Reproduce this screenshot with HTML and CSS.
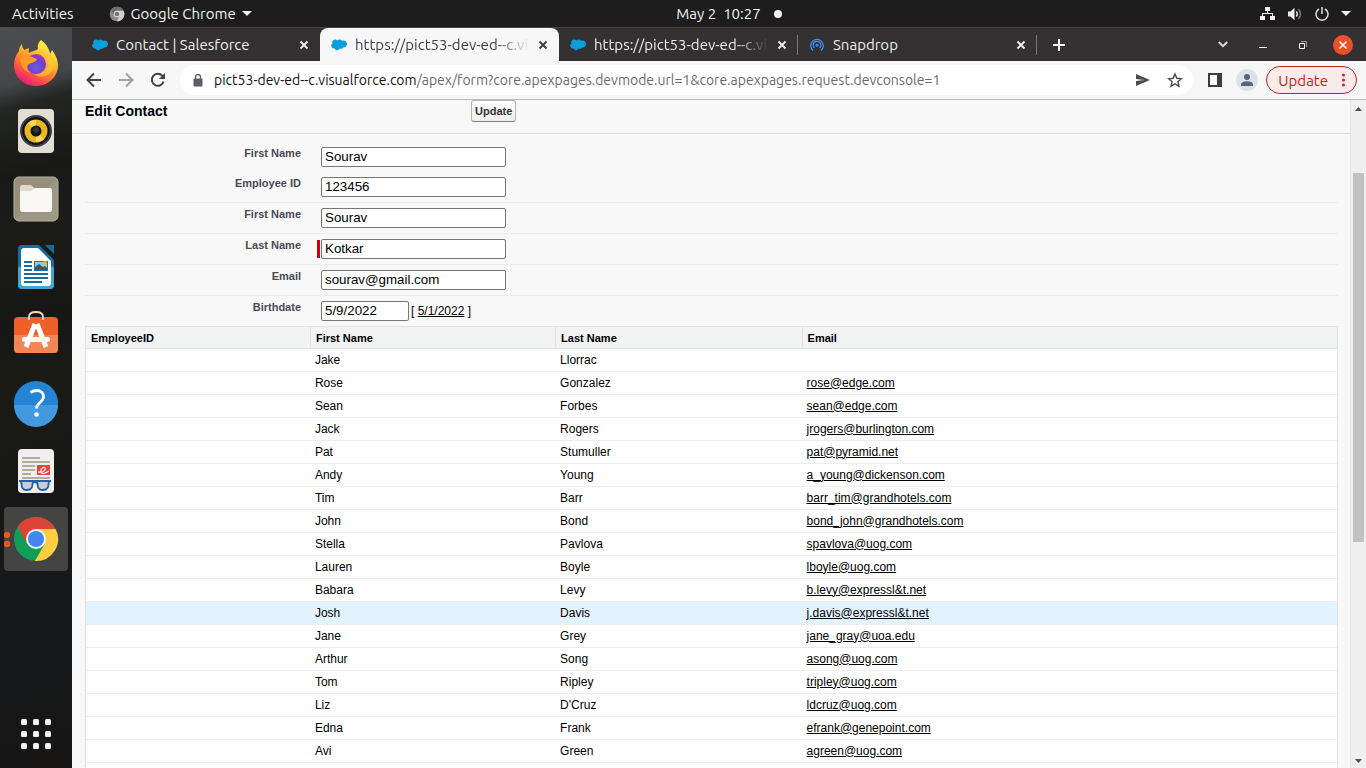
FILE: index.html
```html
<!DOCTYPE html>
<html lang="en">
<head>
<meta charset="utf-8">
<title>Edit Contact</title>
<link rel="stylesheet" href="styles.css">
</head>
<body>
<svg class="defs" aria-hidden="true">
  <symbol id="cloud" viewBox="0 0 16 12"><path fill="#0a9edc" d="M6.6 1.4C7.2.8 8 .5 8.800.6c1 .1 1.800.5 2.300 1.200.5-.2 1-.3 1.500-.3C14.500 1.500 16 3.100 16 5s-1.500 3.600-3.400 3.600l-.7-.1c-.4.8-1.200 1.300-2.100 1.300-.4 0-.7-.1-1-.2-.5 1-1.400 1.700-2.600 1.700-1.200 0-2.200-.7-2.600-1.800l-.6.1C1.400 9.600.2 8.400.2 6.800c0-1 .5-1.900 1.300-2.400-.2-.4-.3-.8-.3-1.200C1.200 1.600 2.500.4 4.100.4c1 0 1.900.3 2.500 1z"/></symbol>
  <symbol id="x" viewBox="0 0 10 10"><path d="M1.500 1.500l7 7m0-7l-7 7" fill="none" stroke="currentColor" stroke-width="1.900"/></symbol>
</svg>
<header class="topbar">
  <div class="top-left">
    <button class="plain" type="button">Activities</button>
    <button class="plain app-menu" type="button">
      <svg width="16" height="16" viewBox="0 0 48 48"><circle cx="24" cy="24" r="22" fill="#8b8b8b"/><path fill="#6d6d6d" d="M5.500 12A22 22 0 0 1 43.600 14H24L15.300 29z"/><path fill="#cfcfcf" d="M43.600 14A22 22 0 0 1 22.900 46L32.700 29 24 14z"/><circle cx="24" cy="24" r="10" fill="#ddd"/><circle cx="24" cy="24" r="7" fill="#777"/></svg>
      <span>Google Chrome</span>
      <svg width="10" height="5" viewBox="0 0 10 5"><path fill="#f2f2f2" d="M0 0h10L5 5z"/></svg>
    </button>
  </div>
  <div class="clock"><span>May 2</span><span>10:27</span><i class="dot"></i></div>
  <div class="top-right">
    <svg width="15" height="14" viewBox="0 0 15 14" fill="#f2f2f2"><path d="M5 0h5v4H5zM0 9h5v4H0zM10 9h5v4h-5z"/><path d="M7 4h1v2h5v3h-1V7H3v2H2V6h5z"/></svg>
    <svg width="16" height="14" viewBox="0 0 16 14"><path fill="#f2f2f2" d="M1 4.500h2.500L7.500.8v12.400L3.500 9.500H1z"/><path fill="none" stroke="#f2f2f2" stroke-width="1.400" d="M9.300 4.500a3.500 3.500 0 0 1 0 5"/><path fill="none" stroke="#8a8a8a" stroke-width="1.300" d="M11.500 2.300a6.500 6.500 0 0 1 0 9.400"/></svg>
    <svg width="14" height="14" viewBox="0 0 14 14" fill="none" stroke="#dcdcdc" stroke-width="1.500"><path d="M4 2a6 6 0 1 0 6 0M7 0v7"/></svg>
    <svg class="caret" width="10" height="5" viewBox="0 0 10 5"><path fill="#f2f2f2" d="M0 0h10L5 5z"/></svg>
  </div>
</header>
<div class="desktop">
  <nav class="dock" aria-label="Dock">
    <button type="button" aria-label="Firefox"><svg width="48" height="48" viewBox="0 0 48 48"><defs><linearGradient id="ff" x1=".8" y1=".1" x2=".3" y2="1"><stop offset="0" stop-color="#fff34a"/><stop offset=".35" stop-color="#ffb627"/><stop offset=".65" stop-color="#ff6a35"/><stop offset="1" stop-color="#f0147a"/></linearGradient><radialGradient id="fp" cx=".5" cy=".7" r=".7"><stop offset="0" stop-color="#6a5ae8"/><stop offset=".6" stop-color="#7040c8"/><stop offset="1" stop-color="#a832d8"/></radialGradient></defs><path fill="url(#ff)" d="M29 1c5 4 8 8 9 14l2-4c4 5 6 11 6 15 0 12-10 21-22 21S2 38 2 26c0-6 2-10 5-14 0-3 1-5 3-7 0 3 1 5 3 6 1-1 3-2 4-2 0 2-1 4 0 5 4-3 9-2 9-5-1-3 1-6 3-8z"/><circle cx="24" cy="25" r="10" fill="url(#fp)"/><path fill="#ff9a22" d="M8 20c4-2 8-4 12-2l5 2c-1 4-6 3-9 6-2 3 0 6 3 8-6-1-10-6-11-14z"/><path fill="#ffc63a" d="M26 11c7 0 11 6 10 13-1 8-7 12-14 11 7 6 18 2 20-9 0-8-5-10-7-12 1 2 1 3 0 4-2-4-5-6-9-7z" opacity=".7"/></svg></button>
    <button type="button" aria-label="Rhythmbox"><svg width="48" height="48" viewBox="0 0 48 48"><rect x="6" y="2" width="36" height="44" rx="4" fill="#e3ded3"/><circle cx="24" cy="24" r="16" fill="#40424f"/><circle cx="24" cy="24" r="14" fill="#15161a"/><circle cx="24" cy="24" r="11.500" fill="#e8b71d"/><path fill="#f8d95b" d="M24 24L16 16a11 11 0 0 1 8-3zM24 24l8 8a11 11 0 0 1-8 3z"/><circle cx="24" cy="24" r="5.500" fill="#141414"/><circle cx="24" cy="23" r="3" fill="#333"/></svg></button>
    <button type="button" aria-label="Files"><svg width="48" height="48" viewBox="0 0 48 48"><rect x="2" y="2" width="44" height="44" rx="5" fill="#968f7c" stroke="#b8b2a2"/><path fill="#a39d8b" d="M45 3v42H3z" opacity=".6"/><path fill="#ded9ca" d="M8 12q0-2 2-2h9l4 4h-1l-3 4H8z"/><path fill="#f9f8f5" d="M8 17q0-1 2-1h9l4-3h15q2 0 2 2v20q0 2-2 2H10q-2 0-2-2z"/></svg></button>
    <button type="button" aria-label="LibreOffice Writer"><svg width="48" height="48" viewBox="0 0 48 48"><path fill="#176c9f" d="M10 2h17l15 15v25q0 4-4 4H10q-4 0-4-4V6q0-4 4-4z"/><path fill="#48a3cf" d="M6 24h36v18q0 4-4 4H10q-4 0-4-4z"/><path fill="#fff" d="M12 5h14l13 13v22q0 3-3 3H12q-3 0-3-3V8q0-3 3-3z"/><path fill="#176c9f" d="M33 2h9v9zM12 18h8v2h-8zM12 22h8v2h-8zM12 26h8v2h-8zM12 30h24v2H12zM12 34h24v2H12zM12 38h18v2H12z"/><path fill="#1778ae" d="M22 18h14v10H22z"/><path fill="#8fc8e8" d="M23 19h12v8H23z"/><path fill="#52524a" d="M23 27v-3l4-3 4 3 2-1 2 2v2z"/><circle cx="33" cy="20" r="2" fill="#f0b429"/></svg></button>
    <button type="button" aria-label="Ubuntu Software"><svg width="48" height="48" viewBox="0 3 48 48"><rect x="2" y="9" width="44" height="36" rx="4" fill="#ed6129"/><path fill="#f38655" d="M2 27h44v14q0 4-4 4H6q-4 0-4-4z"/><path d="M17 12V9q0-5 7-5t7 5v3" fill="none" stroke="#f2dfae" stroke-width="1.800"/><path d="M23 16L14 39M25 16l9 23" stroke="#fff" stroke-width="5"/><rect x="10" y="29" width="28" height="5" rx="2.500" fill="#fff"/></svg></button>
    <button type="button" aria-label="Help"><svg width="48" height="48" viewBox="0 0 48 48"><circle cx="24" cy="24" r="22" fill="#2484d5"/><path fill="#4299df" d="M2 26h44a22 22 0 0 1-44 0z"/><path d="M18.500 13.500q3-2 6-2c5 0 7 3 7 6 0 6-7 6-7 12" fill="none" stroke="#fff" stroke-width="2.800"/><circle cx="24.500" cy="35.500" r="2.300" fill="#fff"/></svg></button>
    <button type="button" aria-label="Document Viewer"><svg width="48" height="48" viewBox="0 0 48 48"><rect x="6" y="2" width="36" height="44" rx="4" fill="#f0efed"/><path fill="#b5ad9c" d="M10 10h18v2H10zM10 14h28v2H10zM10 18h13v2H10zM10 22h13v2H10zM10 26h9v2h-9zM10 30h28v2H10z"/><path fill="#e9433a" d="M25 18h13v10H25z"/><path d="M26 25c5 1 8-2 7-4s-5 1-4 4 5 1 8-1" fill="none" stroke="#fff" stroke-width="1.200"/><g fill="#c9ccd0" stroke="#255fa9" stroke-width="1.800"><path d="M9 34h12l-1 6q-1 3-5 3t-5-3zM25 34h12l-1 6q-1 3-5 3t-5-3z"/><path d="M7 34h32M21 36q2-2 4 0" fill="none"/></g></svg></button>
    <button type="button" class="running" aria-label="Google Chrome"><svg width="48" height="48" viewBox="0 0 48 48"><circle cx="24" cy="24" r="22" fill="#109d58"/><path fill="#dc4437" d="M5.500 12A22 22 0 0 1 43.600 14H24L15.300 29z"/><path fill="#ffce41" d="M43.600 14A22 22 0 0 1 22.900 46L32.700 29 24 14z"/><circle cx="24" cy="24" r="10" fill="#f3f3f3"/><circle cx="24" cy="24" r="8" fill="#4385f5"/></svg><i class="pips"></i></button>
    <button type="button" class="apps" aria-label="Show Applications"><svg width="32" height="32" viewBox="0 0 32 32" fill="#f0f0ee"><g id="r"><rect x="1" y="1" width="6" height="6" rx="1.500"/><rect x="13" y="1" width="6" height="6" rx="1.500"/><rect x="25" y="1" width="6" height="6" rx="1.500"/></g><use href="#r" y="12"/><use href="#r" y="24"/></svg></button>
  </nav>
  <div class="window">
    <div class="tabstrip">
      <div class="tab"><svg width="16" height="12"><use href="#cloud"/></svg><span>Contact | Salesforce</span><button type="button" aria-label="Close tab"><svg width="10" height="10"><use href="#x"/></svg></button></div>
      <div class="tab active"><svg width="16" height="12"><use href="#cloud"/></svg><span class="long">https://pict53-dev-ed--c.vi</span><button type="button" aria-label="Close tab"><svg width="10" height="10"><use href="#x"/></svg></button></div>
      <div class="tab split"><svg width="16" height="12"><use href="#cloud"/></svg><span class="long">https://pict53-dev-ed--c.vi</span><button type="button" aria-label="Close tab"><svg width="10" height="10"><use href="#x"/></svg></button></div>
      <div class="tab split"><svg width="16" height="16" viewBox="0 0 16 16" fill="none" stroke="#418df2" stroke-width="1.300"><path d="M4 13.500a6.300 6.300 0 1 1 8 0M5.300 11a3.900 3.900 0 1 1 5.400 0"/><circle cx="8" cy="8.300" r="1.500" fill="#418df2" stroke="none"/></svg><span>Snapdrop</span><button type="button" aria-label="Close tab"><svg width="10" height="10"><use href="#x"/></svg></button></div>
      <button class="new-tab" type="button" aria-label="New tab"><svg width="12" height="12" viewBox="0 0 12 12"><path d="M6 0v12M0 6h12" stroke="#fff" stroke-width="2"/></svg></button>
      <div class="controls">
        <button type="button" aria-label="Search tabs"><svg width="10" height="7" viewBox="0 0 10 7"><path d="M.8 1L5 5.200 9.200 1" fill="none" stroke="#ddd" stroke-width="1.900"/></svg></button>
        <button type="button" aria-label="Minimize"><svg width="8" height="7" viewBox="0 0 8 7"><path d="M0 6.500h8" stroke="#fff"/></svg></button>
        <button type="button" aria-label="Restore"><svg width="8" height="8" viewBox="0 0 8 8" fill="none"><path d="M2 .5h5.500V6" stroke="#999"/><path d="M.5 2.500h5v5h-5z" stroke="#fff"/></svg></button>
        <button type="button" aria-label="Close window"><svg width="20" height="20" viewBox="0 0 20 20"><circle cx="10" cy="10" r="10" fill="#ec5029"/><path d="M6.500 6.500l7 7m0-7l-7 7" stroke="#fff" stroke-width="1.500"/></svg></button>
      </div>
    </div>
    <div class="toolbar">
      <button class="tool" type="button" aria-label="Back"><svg width="16" height="16" viewBox="0 0 16 16" fill="none" stroke="#3f4144" stroke-width="2"><path d="M15 8H2M8 1.500L1.500 8 8 14.500"/></svg></button>
      <button class="tool" type="button" aria-label="Forward"><svg width="16" height="16" viewBox="0 0 16 16" fill="none" stroke="#a0a1a3" stroke-width="2"><path d="M1 8h13M8 1.500L14.500 8 8 14.500"/></svg></button>
      <button class="tool" type="button" aria-label="Reload"><svg width="16" height="16" viewBox="0 0 16 16"><path d="M13.600 9.500a6 6 0 1 1-1.300-5.700l1 1" fill="none" stroke="#3f4144" stroke-width="2"/><path d="M15 1v6H9z" fill="#3f4144"/></svg></button>
      <div class="omnibox">
        <svg width="10" height="13" viewBox="0 0 10 13"><rect y="4.500" x=".5" width="9" height="8" rx="1" fill="#5b5f64"/><path d="M2.500 5V3a2.500 2.500 0 0 1 5 0v2" fill="none" stroke="#5b5f64" stroke-width="1.400"/></svg>
        <div class="url"><b>pict53-dev-ed--c.visualforce.com</b>/apex/form?core.apexpages.devmode.url=1&amp;core.apexpages.request.devconsole=1</div>
        <button class="tool" type="button" aria-label="Share"><svg width="14" height="12" viewBox="0 0 14 12"><path d="M0 0l14 6-14 6V7l8-1-8-1z" fill="#4a4b4d"/></svg></button>
        <button class="tool" type="button" aria-label="Bookmark"><svg width="16" height="16" viewBox="0 0 16 16"><path d="M8 2l1.800 4.300 4.700.4-3.600 3 1.100 4.600L8 11.800l-4 2.500 1.100-4.600-3.600-3 4.700-.4z" fill="none" stroke="#4a4b4d" stroke-width="1.400"/></svg></button>
      </div>
      <div class="tools">
        <button class="tool" type="button" aria-label="Side panel"><svg width="14" height="14" viewBox="0 0 14 14"><path fill="#3b3c3e" fill-rule="evenodd" d="M0 0h14v14H0zM2 2v10h7V2z"/></svg></button>
        <button class="tool" type="button" aria-label="Profile"><svg width="22" height="22" viewBox="0 0 22 22"><circle cx="11" cy="11" r="11" fill="#dee1e6"/><circle cx="11" cy="8" r="3" fill="#56647a"/><path d="M5 17v-1.500C5 13 9 12.300 11 12.300s6 .7 6 3.200V17z" fill="#56647a"/></svg></button>
      </div>
      <button class="update" type="button"><span>Update</span><svg width="3" height="14" viewBox="0 0 3 14" fill="#c5221f"><circle cx="1.500" cy="2" r="1.500"/><circle cx="1.500" cy="7" r="1.500"/><circle cx="1.500" cy="12" r="1.500"/></svg></button>
    </div>
    <div class="viewport">
      <main class="page">
        <form>
          <div class="page-head"><h1>Edit Contact</h1><button class="save" type="button">Update</button></div>
          <div class="fields">
            <div class="row bare"><label for="f1">First Name</label><div class="value"><input type="text" id="f1" value="Sourav"></div></div>
            <div class="row"><label for="f2">Employee ID</label><div class="value"><input type="text" id="f2" value="123456"></div></div>
            <div class="row"><label for="f3">First Name</label><div class="value"><input type="text" id="f3" value="Sourav"></div></div>
            <div class="row"><label for="f4">Last Name</label><div class="value required"><input type="text" id="f4" value="Kotkar"></div></div>
            <div class="row"><label for="f5">Email</label><div class="value"><input type="text" id="f5" value="sourav@gmail.com"></div></div>
            <div class="row bare"><label for="f6">Birthdate</label><div class="value"><input class="date" type="text" id="f6" value="5/9/2022"><span class="today">[ <a href="#">5/1/2022</a> ]</span></div></div>
          </div>
        </form>
        <table>
          <colgroup><col class="c1"><col class="c2"><col class="c3"><col></colgroup>
          <thead><tr><th>EmployeeID</th><th>First Name</th><th>Last Name</th><th>Email</th></tr></thead>
          <tbody>
            <tr><td></td><td>Jake</td><td>Llorrac</td><td></td></tr>
            <tr><td></td><td>Rose</td><td>Gonzalez</td><td><a href="#">rose@edge.com</a></td></tr>
            <tr><td></td><td>Sean</td><td>Forbes</td><td><a href="#">sean@edge.com</a></td></tr>
            <tr><td></td><td>Jack</td><td>Rogers</td><td><a href="#">jrogers@burlington.com</a></td></tr>
            <tr><td></td><td>Pat</td><td>Stumuller</td><td><a href="#">pat@pyramid.net</a></td></tr>
            <tr><td></td><td>Andy</td><td>Young</td><td><a href="#">a_young@dickenson.com</a></td></tr>
            <tr><td></td><td>Tim</td><td>Barr</td><td><a href="#">barr_tim@grandhotels.com</a></td></tr>
            <tr><td></td><td>John</td><td>Bond</td><td><a href="#">bond_john@grandhotels.com</a></td></tr>
            <tr><td></td><td>Stella</td><td>Pavlova</td><td><a href="#">spavlova@uog.com</a></td></tr>
            <tr><td></td><td>Lauren</td><td>Boyle</td><td><a href="#">lboyle@uog.com</a></td></tr>
            <tr><td></td><td>Babara</td><td>Levy</td><td><a href="#">b.levy@expressl&amp;t.net</a></td></tr>
            <tr class="hot"><td></td><td>Josh</td><td>Davis</td><td><a href="#">j.davis@expressl&amp;t.net</a></td></tr>
            <tr><td></td><td>Jane</td><td>Grey</td><td><a href="#">jane_gray@uoa.edu</a></td></tr>
            <tr><td></td><td>Arthur</td><td>Song</td><td><a href="#">asong@uog.com</a></td></tr>
            <tr><td></td><td>Tom</td><td>Ripley</td><td><a href="#">tripley@uog.com</a></td></tr>
            <tr><td></td><td>Liz</td><td>D'Cruz</td><td><a href="#">ldcruz@uog.com</a></td></tr>
            <tr><td></td><td>Edna</td><td>Frank</td><td><a href="#">efrank@genepoint.com</a></td></tr>
            <tr><td></td><td>Avi</td><td>Green</td><td><a href="#">agreen@uog.com</a></td></tr>
            <tr><td></td><td></td><td></td><td></td></tr>
          </tbody>
        </table>
      </main>
      <div class="scrollbar" aria-hidden="true">
        <svg width="7" height="4" viewBox="0 0 7 4"><path d="M0 4h7L3.500 0z" fill="#505050"/></svg>
        <div class="track"><div class="thumb"></div></div>
        <svg width="7" height="4" viewBox="0 0 7 4"><path d="M0 0h7L3.500 4z" fill="#505050"/></svg>
      </div>
    </div>
  </div>
</div>
</body>
</html>
```
FILE: styles.css
```css
* { box-sizing: border-box; }
body {
  margin: 0;
  height: 100vh;
  overflow: hidden;
  display: flex;
  flex-direction: column;
  font-family: Ubuntu, "Noto Sans", "Open Sans", sans-serif;
  font-size: 15px;
}
button { border: 0; padding: 0; margin: 0; background: none; font: inherit; color: inherit; }
svg { flex: none; display: block; }
.defs { position: absolute; width: 0; height: 0; }

/* System bar */
.topbar {
  flex: none;
  height: 27px;
  display: grid;
  grid-template-columns: 1fr auto 1fr;
  align-items: center;
  background: #1d1d1d;
  color: #f2f2f2;
}
.top-left { display: flex; gap: 35px; padding-left: 12px; }
.app-menu { display: flex; align-items: center; gap: 6px; }
.clock { display: flex; align-items: center; gap: 7px; padding-left: 92px; }
.dot { width: 8px; height: 8px; margin-left: 6px; border-radius: 50%; background: #f2f2f2; }
.top-right { display: flex; align-items: center; justify-content: flex-end; gap: 12px; padding-right: 15px; }

.desktop { flex: 1; min-height: 0; display: flex; }

/* Dock */
.dock {
  flex: none;
  width: 72px;
  display: flex;
  flex-direction: column;
  gap: 4px;
  padding: 4px;
  background: linear-gradient(165deg, #4c4d50 0, #45464a 8%, #232622 11%, #181817 20%, #1b1c17 28%, #161615 40%, #1b1b15 48%, #171716 60%, #16181a 80%, #171615 100%);
}
.dock button {
  flex: none;
  position: relative;
  height: 64px;
  display: grid;
  place-items: center;
  border-radius: 4px;
}
.dock .running { background: #444443; }
.dock .apps { margin-top: auto; margin-bottom: -2px; }
.pips {
  position: absolute;
  left: 0;
  top: 25px;
  width: 6px;
  height: 15px;
  background: radial-gradient(circle at 3px 3px, #e95420 3px, transparent 3px), radial-gradient(circle at 3px 12px, #e95420 3px, transparent 3px);
}

/* Browser frame */
.window { flex: 1; min-width: 0; display: flex; flex-direction: column; background: #f7f7f7; }
.tabstrip {
  flex: none;
  height: 34px;
  display: flex;
  padding-left: 9px;
  background: #333132;
  border-top: 1px solid #454444;
  color: #eeeeee;
}
.tab {
  flex: 0 1 239px;
  min-width: 0;
  display: flex;
  align-items: center;
  padding: 0 11px;
  gap: 8px;
}
.tab span { flex: 1; overflow: hidden; white-space: nowrap; }
.tab .long { mask-image: linear-gradient(to right, #000 80%, transparent); }
.tab.active { background: #f7f7f7; color: #3c4043; border-radius: 8px 8px 0 0; }
.tab.split { background: linear-gradient(#777, #777) right center / 1px 20px no-repeat; }
.new-tab { width: 44px; display: grid; place-items: center; }
.controls { margin-left: auto; display: flex; padding-right: 3px; }
.controls button { width: 40px; display: grid; place-items: center; }

.toolbar {
  flex: none;
  height: 39px;
  display: flex;
  align-items: center;
  padding: 0 9px 0 6px;
  border-bottom: 1px solid #bcbcbc;
}
.tool { flex: none; width: 32px; height: 28px; display: grid; place-items: center; }
.omnibox {
  flex: 1;
  min-width: 0;
  height: 30px;
  margin: 0 6px;
  padding: 0 2px 0 13px;
  display: flex;
  align-items: center;
  border-radius: 15px;
  background: #fff;
}
.url { flex: 1; overflow: hidden; white-space: nowrap; padding-left: 11px; font-size: 14px; color: #6a6b6d; }
.url b { font-weight: 400; color: #111; }
.tools { display: flex; }
.update {
  height: 28px;
  margin-left: 3px;
  padding: 0 11px;
  display: flex;
  align-items: center;
  gap: 14px;
  border: 1px solid #c5221f;
  border-radius: 14px;
  background: #fbebea;
  color: #c5221f;
}

/* Page */
.viewport { flex: 1; min-height: 0; display: flex; overflow: hidden; }
.page {
  flex: 1;
  min-width: 0;
  overflow: hidden;
  background: #f8f8f8;
  font: 12px/15px "Liberation Sans", Arial, sans-serif;
  color: #000;
}
.page a { color: #000; }
.page-head {
  height: 34px;
  display: grid;
  grid-template-columns: 386px auto;
  justify-content: start;
  align-items: start;
  padding-left: 13px;
  border-bottom: 1px solid #dbdbdb;
}
h1 { margin: 3px 0 0; font-size: 14px; line-height: 16px; }
.save {
  height: 22px;
  padding: 0 3px;
  border: 1px solid #b5b5b5;
  border-bottom-color: #7f7f7f;
  border-radius: 3px;
  background: linear-gradient(#fff, #eeeeee);
  color: #333;
  font-size: 11px;
  font-weight: 700;
}
.fields { margin: 8px 12px 0 13px; }
.row {
  display: grid;
  grid-template-columns: 216px 1fr;
  column-gap: 20px;
  min-height: 30px;
  border-bottom: 1px solid #ececec;
  box-sizing: content-box;
}
.row.bare { border-bottom: 0; }
.row label { padding-top: 4px; text-align: right; font-size: 11px; font-weight: 700; color: #4a4a56; }
.value { display: flex; align-items: flex-start; padding-top: 5px; }
.value input {
  width: 185px;
  height: 20px;
  padding: 0 3px 1px;
  border: 1px solid #767676;
  border-radius: 2px;
  background: #fff;
  font-family: "Liberation Sans", Arial, sans-serif;
  color: #000;
}
.value .date { width: 88px; }
.required::before { content: ""; width: 3px; height: 18px; margin: 1px 1px 0 -4px; background: #c8000e; }
.today { padding: 3px 0 0 2px; white-space: pre; }

table {
  width: calc(100% - 25px);
  margin: 0 12px 0 13px;
  table-layout: fixed;
  border-collapse: separate;
  border-spacing: 0;
  border: 1px solid #e0e3e5;
  border-bottom: 0;
  background: #fff;
}
.c1 { width: 17.9%; }
.c2 { width: 19.6%; }
.c3 { width: 19.7%; }
th, td { height: 23px; padding: 0 5px; text-align: left; border-bottom: 1px solid #ececec; }
th {
  height: 22px;
  padding-top: 2px;
  font-size: 11px;
  background: #f2f3f3;
  border-bottom-color: #e0e3e5;
  border-left: 1px solid #e0e3e5;
}
th:first-child { border-left: 0; }
.hot td { background: #e3f3ff; }

.scrollbar {
  flex: none;
  width: 16px;
  display: flex;
  flex-direction: column;
  align-items: center;
  padding: 7px 0 5px;
  border-left: 1px solid #e6e6e6;
  background: #f0f0f0;
}
.track { flex: 1; width: 11px; padding: 3px 0; display: grid; grid-template-rows: 59fr 369fr 214fr; }
.thumb { grid-row: 2; background: #c1c1c1; }
```
